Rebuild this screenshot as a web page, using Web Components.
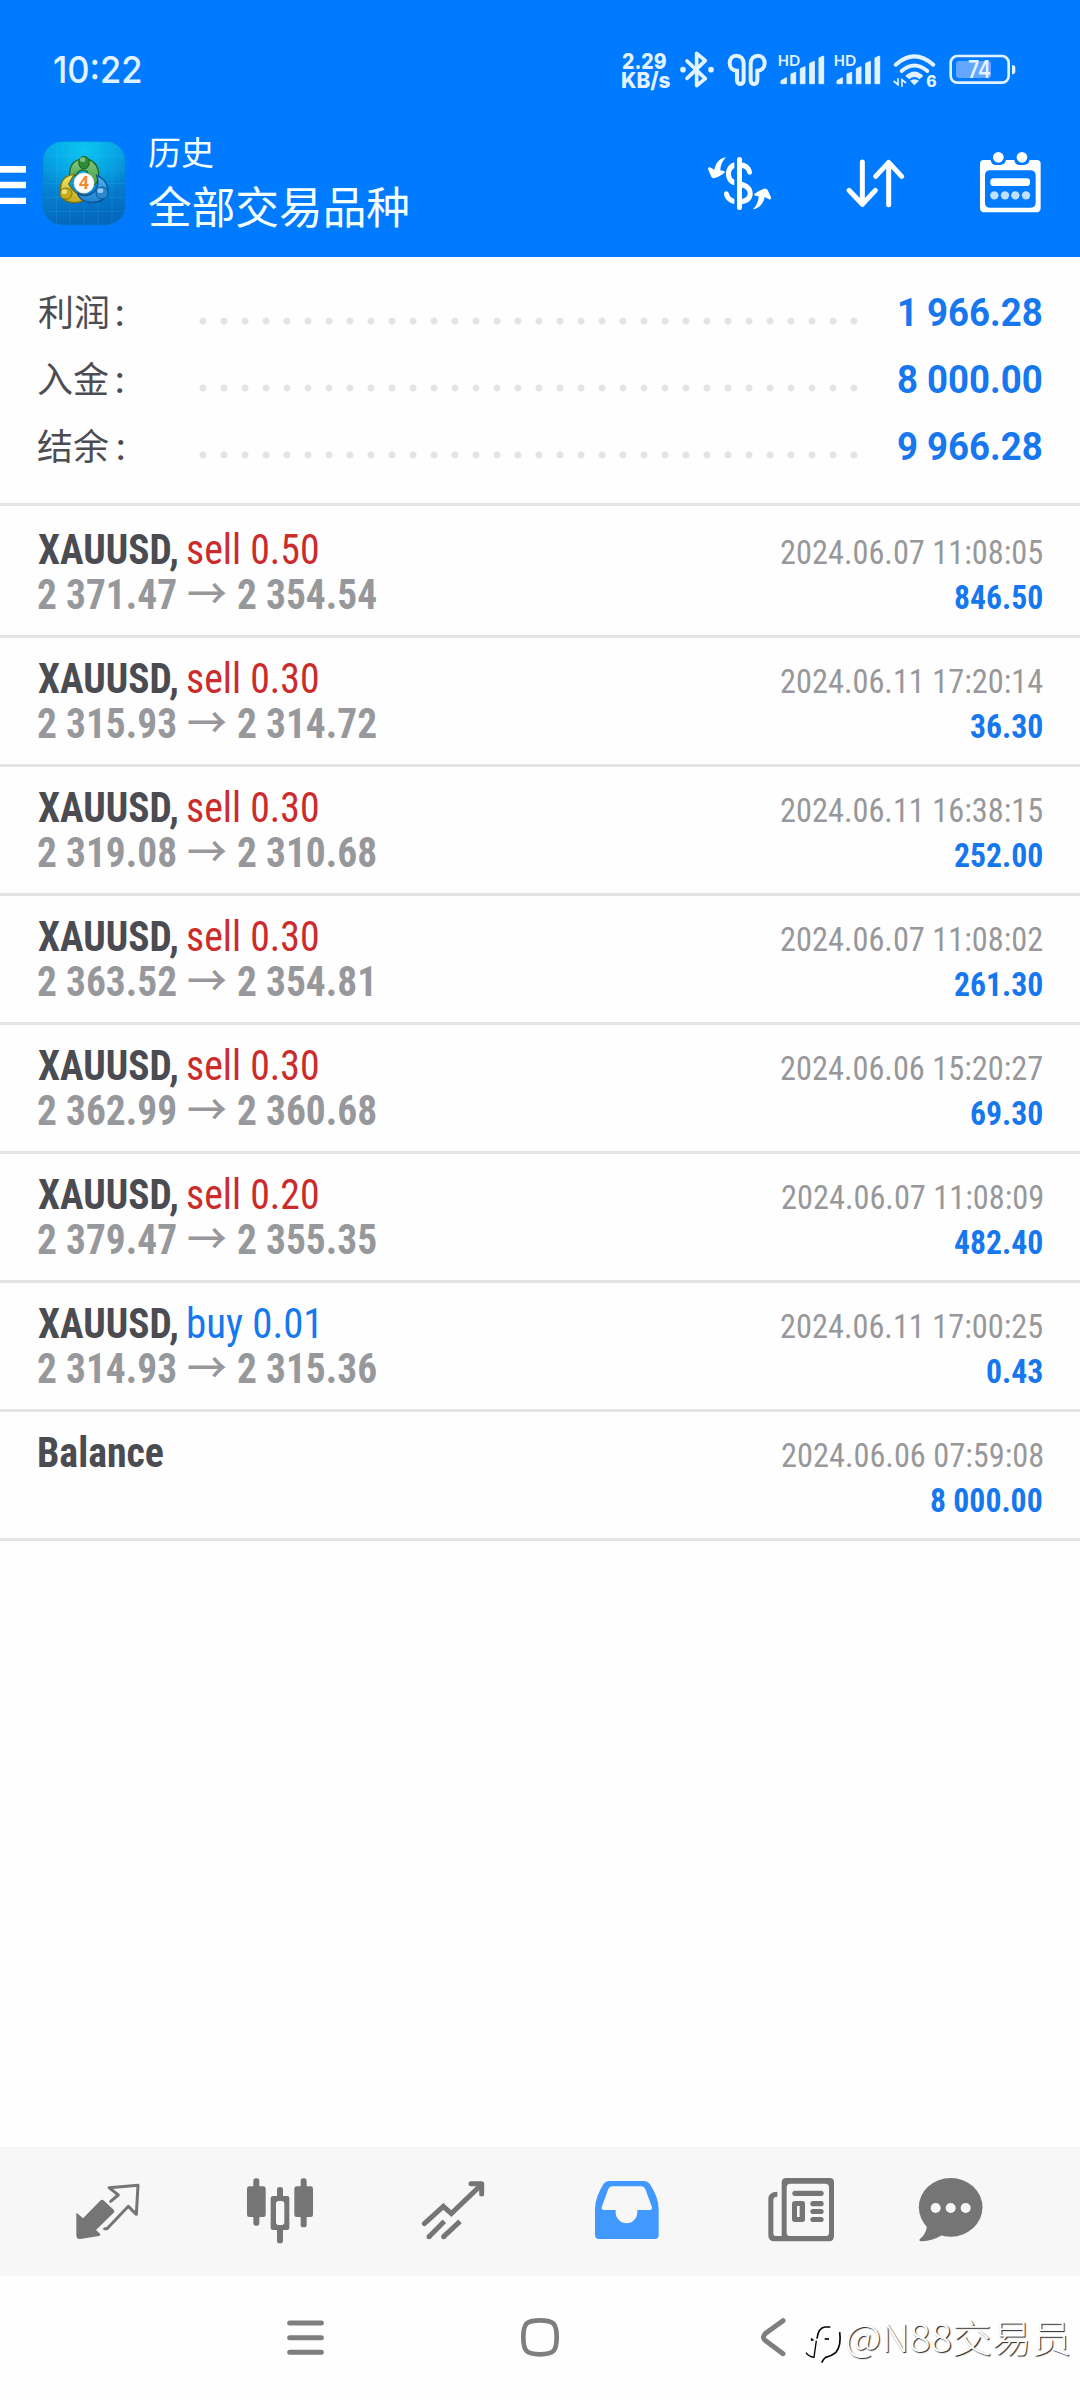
<!DOCTYPE html>
<html lang="zh-CN">
<head>
<meta charset="utf-8">
<meta name="viewport" content="width=device-width">
<title>历史</title>
<style>
html,body{margin:0;padding:0;background:#fefefe}
body{font-family:"Roboto Condensed",Roboto,"Noto Sans CJK SC",sans-serif}
</style>
</head>
<body>
<history-app></history-app>
<script>
const define=(name,css,html,init)=>customElements.define(name,class extends HTMLElement{
  constructor(){
    super();
    this.attachShadow({mode:'open'}).innerHTML=`<style>${css}</style>${typeof html==='function'?'':html}`;
  }
  connectedCallback(){
    if(typeof html==='function'&&!this.done){this.shadowRoot.innerHTML=`<style>${css}</style>${html(this)}`;this.done=true}
    if(init)init(this);
  }
});

/* Text whose glyph extent is fitted to a given width. "sample" names the string the width belongs to. */
const ctx=document.createElement('canvas').getContext('2d');
define('fit-text',
`:host{display:inline-block;white-space:pre}span{display:inline-block;transform-origin:0 50%;white-space:pre}`,
`<span></span>`,
el=>{
  const s=el.shadowRoot.querySelector('span');
  const text=el.getAttribute('text');
  s.textContent=text;
  const cs=getComputedStyle(el);
  ctx.font=`${cs.fontWeight} ${cs.fontSize} ${cs.fontFamily}`;
  const ink=t=>{const m=ctx.measureText(t);return{l:-m.actualBoundingBoxLeft,w:m.actualBoundingBoxRight+m.actualBoundingBoxLeft}};
  const ref=ink(el.getAttribute('sample')||text), own=ink(text);
  const k=parseFloat(el.getAttribute('w'))/ref.w;
  s.style.transform=`scaleX(${k})`;
  s.style.marginLeft=-own.l*k+'px';
  s.style.width=own.w+'px';
  s.style.marginRight=-(own.w-own.w*k)+own.l*k+'px';
  el.style.width=own.w*k+'px';
});

const S='#757575', W='#e2f2ff', B='#007aff';
const bars=`<g fill="${W}" stroke="${W}" stroke-width="3" stroke-linejoin="round"><path d="M542 161V152L558 143V161Z"/><path d="M572 161V132L586 127V161Z"/><path d="M600 161V116L614 110V161Z"/><path d="M628 161V100L642 94V161Z"/><path d="M656 161V84L670 78V161Z"/></g><text x="532" y="108" textLength="67" lengthAdjust="spacingAndGlyphs" font-family="Lato" font-weight="700" font-size="46" fill="${W}">HD</text>`;
const icons={
 bt:[238,60,104,116,`<path d="M259 93L314 146L288 167V70L314 92L259 145" fill="none" stroke="${W}" stroke-width="11" stroke-linejoin="round" stroke-linecap="round"/><circle cx="247" cy="119" r="8.5" fill="${W}"/><circle cx="331" cy="119" r="8.5" fill="${W}"/>`],
 buds:[380,66,122,106,`<g fill="none" stroke="${W}" stroke-width="12"><path d="M430 101C430 86 421 77 408 77C396 77 388 87 388 100C388 113 397 122 410 122V151C410 166 430 166 430 151Z"/><path d="M430 101C430 86 421 77 408 77C396 77 388 87 388 100C388 113 397 122 410 122V151C410 166 430 166 430 151Z" transform="translate(881 0) scale(-1 1)"/></g>`],
 sig:[530,66,145,100,bars],
 wifi:[874,66,136,106,`<g fill="none" stroke="${W}" stroke-width="12" stroke-linecap="round"><path d="M885 104Q941 54 998 104"/><path d="M903 123Q941 90 980 123"/></g><path d="M914 138Q941 111 968 138L956 148Q941 134 926 148Z" fill="${W}"/><path d="M928 152Q941 143 955 152L941 166Z" fill="${W}"/><g fill="none" stroke="${W}" stroke-width="5"><path d="M892 145V164L879 153M904 170V149L916 159"/></g><text x="977" y="170" textLength="31" lengthAdjust="spacingAndGlyphs" font-family="Inter" font-weight="800" font-size="46" fill="${W}">6</text>`],
 bat:[1046,72,202,92,`<rect x="1051" y="78" width="174" height="80" rx="20" fill="none" stroke="${W}" stroke-width="8"/><rect x="1067" y="93" width="105" height="51" rx="9" fill="#62a6ff"/><path d="M1235 105q10 1 10 8v12q0 7-10 8z" fill="${W}"/><text x="1103" y="144" textLength="69" lengthAdjust="spacingAndGlyphs" font-family="Inter" font-weight="600" font-size="71" fill="${W}">74</text>`],
 menu:[0,405,78,120,`<path d="M0 408h78v20H0zM0 455h78v20H0zM0 503h78v19H0z" fill="#fff"/>`],
 app:[126,333,252,252,`<defs><linearGradient id="bg" x1="0" y1="0" x2=".15" y2="1"><stop offset="0" stop-color="#00a4ea"/><stop offset=".5" stop-color="#0587d4"/><stop offset="1" stop-color="#0468bd"/></linearGradient><radialGradient id="gl" cx=".5" cy=".1" r=".6"><stop offset="0" stop-color="#0cc4f0"/><stop offset="1" stop-color="#0cc4f0" stop-opacity="0"/></radialGradient><linearGradient id="g" x1="0" y1="0" x2="0" y2="1"><stop offset="0" stop-color="#82c980"/><stop offset="1" stop-color="#3f9b43"/></linearGradient><linearGradient id="y" x1="0" y1="0" x2="0" y2="1"><stop offset="0" stop-color="#efe76a"/><stop offset="1" stop-color="#c5aa1d"/></linearGradient><linearGradient id="u" x1="0" y1="0" x2="0" y2="1"><stop offset="0" stop-color="#4db4ee"/><stop offset="1" stop-color="#2183cf"/></linearGradient></defs>
 <rect x="128" y="335" width="248" height="250" rx="58" fill="url(#bg)" stroke="#077bd2" stroke-width="2"/><rect x="128" y="335" width="248" height="250" rx="58" fill="url(#gl)"/>
 <path d="M130 376H374M130 418H374M130 460H374M130 502H374M130 544H374M169 338V582M210 336V584M252 336V584M294 336V584M336 338V582" stroke="#5bc8f5" stroke-opacity=".22" stroke-width="2"/>
 <path d="M209 440Q206 396 240 388H266Q298 400 296 440Q294 462 276 468L262 425Q240 412 228 436Z" fill="url(#g)" stroke="#1d6b2c" stroke-width="4"/>
 <path d="M223 433Q180 438 182 480L196 512Q224 524 250 512L254 494Q220 494 206 462Z" fill="url(#y)" stroke="#77700f" stroke-width="4"/>
 <path d="M290 436Q328 452 322 490Q312 520 270 517Q238 512 232 490Q262 506 284 484Q300 466 290 436Z" fill="url(#u)" stroke="#0d4f94" stroke-width="4"/>
 <ellipse cx="252" cy="398" rx="16" ry="19" fill="#2f8a37" stroke="#1c6128" stroke-width="3"/><ellipse cx="248" cy="389" rx="8" ry="7" fill="#9bd493" opacity=".75"/>
 <ellipse cx="198" cy="491" rx="18" ry="17" fill="#c7ab1e" stroke="#7c6e10" stroke-width="3"/><ellipse cx="193" cy="485" rx="8" ry="7" fill="#f6ef94" opacity=".8"/>
 <ellipse cx="306" cy="489" rx="18" ry="18" fill="#2a86cf" stroke="#13539a" stroke-width="3"/><ellipse cx="301" cy="482" rx="9" ry="7" fill="#a6dcf8" opacity=".8"/>
 <circle cx="252" cy="459" r="31" fill="#fff" stroke="#999" stroke-width="1"/><text x="252" y="478" text-anchor="middle" font-family="Open Sans" font-weight="700" font-size="52" fill="#f08a33">4</text>`],
 dollar:[84,60,192,192,`<rect x="171" y="81" width="15" height="159" rx="7" fill="#fff"/><path d="M163 97C148 101 138 114 138 132C138 150 148 162 163 166V149C156 146 153 141 153 132C153 123 157 117 163 114Z" fill="#fff"/><path d="M184 155C207 160 218 173 218 191C218 208 207 219 184 223V207C197 204 203 199 203 191C203 181 197 176 184 172Z" fill="#fff"/><path d="M184 97C204 101 213 111 216 126Q216 134 209 134Q203 134 201 127C199 119 196 116 184 113Z" fill="#fff"/><path d="M163 222C146 219 135 208 132 192Q132 184 139 184Q145 184 147 191C149 199 154 204 163 206Z" fill="#fff"/><path d="M138 82C120 84 107 98 103 119L90 112Q83 111 84 118L94 140Q98 146 105 144Q122 138 133 129Q137 124 131 123L121 121C121 106 128 92 138 82Z" fill="#fff"/><path transform="rotate(180 178.5 160)" d="M138 82C120 84 107 98 103 119L90 112Q83 111 84 118L94 140Q98 146 105 144Q122 138 133 129Q137 124 131 123L121 121C121 106 128 92 138 82Z" fill="#fff"/>`],
 sort:[498,60,177,192,`<path d="M547 96V222M507 181L547 223L586 181M626 224V98M587 139L626 97L665 139" fill="none" stroke="#fff" stroke-width="15" stroke-linecap="round" stroke-linejoin="round"/>`],
 cal:[897,60,186,192,`<path fill-rule="evenodd" fill="#fff" d="M911 90H1071Q1082 90 1082 101V233Q1082 247 1068 247H914Q900 247 900 233V101Q900 90 911 90ZM931 121Q915 121 915 136V218Q915 233 931 233H1050Q1067 233 1067 218V136Q1067 121 1050 121Z"/><path d="M932 82V90Q934 105 948 105H962Q978 103 978 88V82ZM1003 82V90Q1005 105 1019 105H1033Q1049 103 1049 88V82Z" fill="${B}"/><circle cx="955" cy="82" r="16" fill="#fff"/><circle cx="1026" cy="82" r="16" fill="#fff"/><rect x="931" y="145" width="119" height="23" rx="10" fill="#fff"/><g fill="#bfe0ff"><circle cx="943" cy="196" r="12.5"/><circle cx="975" cy="196" r="12.5"/><circle cx="1006" cy="196" r="12.5"/><circle cx="1038" cy="196" r="12.5"/></g>`],
 trade:[107,114,198,198,`<path d="M108 220Q109 218 112 221L128 235L181 181Q186 177 191 182L220 209Q224 214 220 218L167 270L179 281Q182 286 176 288L120 297Q108 298 108 286Z" fill="${S}"/><path d="M211 184L234 165L206 143L293 136L288 223L264 199L200 266H193" fill="none" stroke="${S}" stroke-width="9" stroke-linejoin="round" stroke-linecap="round"/>`],
 candles:[621,114,198,198,`<g fill="${S}"><rect x="640" y="115" width="18" height="142" rx="8"/><rect x="621" y="139" width="56" height="92" rx="7"/><rect x="782" y="115" width="18" height="147" rx="8"/><rect x="763" y="139" width="56" height="92" rx="7"/><rect x="711" y="141" width="18" height="40" rx="8"/><rect x="711" y="262" width="18" height="48" rx="8"/><path fill-rule="evenodd" d="M699 168H742Q748 168 748 175V263Q748 270 742 270H699Q692 270 692 263V175Q692 168 699 168ZM716 183Q708 183 708 191V247Q708 255 716 255H725Q733 255 733 247V191Q733 183 725 183Z"/></g>`],
 trend:[1143,114,198,198,`<g fill="none" stroke="${S}" stroke-width="15"><path d="M1153 251L1210 199L1234 221L1322 136" stroke-linecap="round" stroke-linejoin="miter"/><path d="M1293 131H1325V162" stroke-linecap="round" stroke-linejoin="round"/><path d="M1167 290L1213 244M1211 290L1260 244" /></g><circle cx="1167" cy="290" r="7.5" fill="${S}"/><circle cx="1211" cy="290" r="7.5" fill="${S}"/>`],
 inbox:[103,114,198,198,`<path fill-rule="evenodd" fill="#4199ff" d="M132 131Q138 123 148 123H254Q264 123 270 131Q297 172 297 207V285Q297 297 285 297H118Q106 297 106 285V207Q106 172 132 131ZM146 147Q149 139 157 139H245Q253 139 257 147L277 202Q278 210 271 210H233V217A32.5 32.500 0 0 1 168 217V210H132Q125 210 126 202Z"/>`],
 news:[625,114,198,198,`<path fill-rule="evenodd" fill="${S}" d="M680 114H810Q823 114 823 127V288Q823 304 808 304H645Q626 304 626 286V176Q626 156 653 155V170Q641 170 641 180V281Q641 288 648 288H666V127Q666 114 680 114ZM692 131Q681 131 681 142V278Q681 288 692 288H797Q808 288 808 278V142Q808 131 797 131Z"/><rect x="698" y="152" width="94" height="16" rx="8" fill="${S}"/><path fill-rule="evenodd" fill="${S}" d="M706 183H728Q736 183 736 191V238Q736 246 728 246H706Q697 246 697 238V191Q697 183 706 183ZM712 198V231H720V198Z"/><g fill="${S}"><rect x="752" y="183" width="40" height="16" rx="8"/><rect x="752" y="207" width="40" height="15" rx="7.500"/><rect x="752" y="231" width="40" height="15" rx="7.500"/></g>`],
 chat:[1075,114,198,198,`<ellipse cx="1173" cy="202" rx="95.500" ry="88" fill="${S}"/><path d="M1101 250Q1104 280 1080 298Q1077 304 1086 304Q1120 302 1148 285Z" fill="${S}"/><g fill="#f7f7f7"><circle cx="1128" cy="204" r="15"/><circle cx="1173" cy="204" r="15"/><circle cx="1218" cy="204" r="15"/></g>`],
 recents:[50,52,111,123,`<path d="M58 70H153M58 114H153M58 157.500H153" stroke="#7e7e7e" stroke-width="15" stroke-linecap="round"/>`],
 home:[750,52,120,123,`<path d="M760 113C760 72 769 62 810 62C851 62 860 72 860 113C860 154 851 164 810 164C769 164 760 154 760 113Z" fill="none" stroke="#7e7e7e" stroke-width="14"/>`],
 back:[62,144,78,123,`<path d="M128 155L77 192Q69 199 69 204Q69 210 77 216L128 254" fill="none" stroke="#7e7e7e" stroke-width="15" stroke-linecap="round" stroke-linejoin="round"/>`],
 mark:[196,164,112,126,`<g fill="none" stroke="#000"><path d="M199 250Q207 262 223 264L230 214" stroke-width="4"/><path d="M216 212H222M216 207V214M232 208Q236 175 256 173H272" stroke-width="5"/><path d="M255 209H268" stroke-width="5"/><path d="M300 188Q306 228 288 250Q276 260 258 264Q252 268 246 280" stroke-width="5"/></g>`]
};
define('ui-icon',`:host{display:block;flex:none}svg{display:block;overflow:visible}`,
 el=>{const[x,y,w,h,m]=icons[el.getAttribute('name')];return `<svg width="${w/3}" height="${h/3}" viewBox="${x} ${y} ${w} ${h}">${m}</svg>`});

define('status-bar',`
:host{display:flex;height:112px;box-sizing:border-box;padding:51px 63.700px 0 54px;color:${W};align-items:flex-start}
.time{font:500 37px/44px Inter,sans-serif;margin-top:-3px;flex:1}
.speed{font:800 22px/19px Inter,sans-serif;display:flex;flex-direction:column;margin:0 9.500px 0 0;padding-top:1px}`,
`<fit-text class="time" w="87" text="10:22"></fit-text>
<div class="speed"><fit-text w="44" text="2.29"></fit-text><fit-text w="48" text="KB/s"></fit-text></div>
<ui-icon name="bt" style="margin:-1px 12.600px 0 0"></ui-icon>
<ui-icon name="buds" style="margin:1px 9.300px 0 0"></ui-icon>
<ui-icon name="sig" style="margin:1px 7.700px 0 0"></ui-icon>
<ui-icon name="sig" style="margin:1px 10.300px 0 0"></ui-icon>
<ui-icon name="wifi" style="margin:1px 12px 0 0"></ui-icon>
<ui-icon name="bat" style="margin:3px 0 0 0"></ui-icon>`);

define('app-bar',`
:host{display:flex;height:145px;color:#f4ffff;padding-right:39px}
.m{margin:53px 16px 0 0}.a{margin:29px 23px 0 0}
.t{flex:1;display:flex;flex-direction:column;padding-top:14px}
.s{font:400 33.500px/50px "Noto Sans CJK SC",sans-serif}
.b{font:400 44px/58px "Noto Sans CJK SC",sans-serif}
.act{display:flex;padding-top:38px}`,
`<ui-icon class="m" name="menu"></ui-icon><ui-icon class="a" name="app"></ui-icon>
<div class="t"><fit-text class="s" w="64.500" text="历史"></fit-text><fit-text class="b" w="259" text="全部交易品种"></fit-text></div>
<div class="act"><ui-icon name="dollar" style="margin-right:74px"></ui-icon><ui-icon name="sort" style="margin-right:74px"></ui-icon><ui-icon name="cal"></ui-icon></div>`);

define('summary-line',`
:host{display:flex;height:67px;align-items:baseline;padding:0 38px;line-height:67px}
.l{display:flex;align-items:baseline;width:161px;color:#4c4c52;font:400 36px/67px "Noto Sans CJK SC",sans-serif;gap:7px}
.c{font-family:Roboto,sans-serif;font-weight:500}
.d{flex:none;width:672px;height:8px;background:radial-gradient(circle 4px at 4px 4px,#e4e4e4 0,#e4e4e4 3.100px,rgba(228,228,228,0) 3.900px) 0 0/21px 8px repeat-x}
.d{transform:translateY(-1px)}
.v{margin-left:auto;font:700 38px/67px Roboto,sans-serif;color:#1677ee}`,
el=>`<div class="l"><fit-text w="70" sample="利润" text="${el.getAttribute('label')}"></fit-text><span class="c">:</span></div><div class="d"></div><fit-text class="v" w="144" sample="9 966.28" text="${el.getAttribute('value')}"></fit-text>`);

define('deal-row',`
:host{display:block;box-sizing:border-box;height:129px;padding:18px 38px 0;border-bottom:3px solid #e4e4e4}
:host([first]){height:132px;padding-top:21px}
.l{display:flex;height:45px;line-height:45px;align-items:baseline;justify-content:space-between}
.q{display:flex;align-items:baseline;font-size:42px}
.q::after{content:"\\200b"}
.n{font-weight:700;color:#4b4b52;margin:0 12px 0 -.5px}
.o{font-weight:700;color:#4b4b52;margin-left:.5px}
.sell{color:#cb2b2b}.buy{color:#1677ee}
.p{font-weight:700;color:#97989c}
.ar{font:500 42px/0 "Noto Sans CJK SC",sans-serif;color:#97989c;margin:0 12px}
.d{font-size:34px;color:#98989b}
.v{font-size:34px;font-weight:700;color:#1677ee}`,
el=>{const a=n=>el.getAttribute(n),s=a('side');
 return `<div class="l"><div class="q">${s?`<fit-text class="n" w="138.800" text="XAUUSD,"></fit-text><fit-text class="${s}" w="${s==='buy'?129:130}" sample="${s} ${s==='buy'?'0.01':'0.50'}" text="${s} ${a('lots')}"></fit-text>`:`<fit-text class="o" w="124" text="Balance"></fit-text>`}</div><fit-text class="d" w="261.500" sample="2024.06.07 11:08:05" text="${a('time')}"></fit-text></div>
<div class="l"><div class="q">${s?`<fit-text class="p" w="138" sample="2 371.47" text="${a('from')}"></fit-text><fit-text class="ar" w="38" text="→"></fit-text><fit-text class="p" w="138" sample="2 354.54" text="${a('to')}"></fit-text>`:''}</div><fit-text class="v" w="87.300" sample="846.50" text="${a('profit')}"></fit-text></div>`});

define('tab-bar',`:host{display:flex;height:129px;box-sizing:border-box;background:#f7f7f7;padding:31px 0 0 75.700px}ui-icon{margin-right:105.300px}ui-icon:nth-of-type(2){margin-right:108px}ui-icon:nth-of-type(3){margin-right:107.300px}ui-icon:nth-of-type(4){margin-right:108px}ui-icon:nth-of-type(5){margin-right:84px}`,
['trade','candles','trend','inbox','news','chat'].map(n=>`<ui-icon name="${n}"></ui-icon>`).join(''));

define('nav-bar',`:host{display:flex;height:124px;box-sizing:border-box;padding:41px 0 0 286.700px}
.mk{margin:7px 4px 0 18.700px}
.wm{font:300 38px/46px "Noto Sans CJK SC",sans-serif;color:#fff;text-shadow:1px 1px 1px #222;margin-top:-4px}`,
`<ui-icon name="recents" style="margin-right:196.300px"></ui-icon><ui-icon name="home" style="margin-right:200.700px"></ui-icon><ui-icon name="back"></ui-icon><ui-icon name="mark" class="mk"></ui-icon><fit-text class="wm" w="222" text="@N88交易员"></fit-text>`);

const deals=[
['sell','0.50','2 371.47','2 354.54','2024.06.07 11:08:05','846.50'],
['sell','0.30','2 315.93','2 314.72','2024.06.11 17:20:14','36.30'],
['sell','0.30','2 319.08','2 310.68','2024.06.11 16:38:15','252.00'],
['sell','0.30','2 363.52','2 354.81','2024.06.07 11:08:02','261.30'],
['sell','0.30','2 362.99','2 360.68','2024.06.06 15:20:27','69.30'],
['sell','0.20','2 379.47','2 355.35','2024.06.07 11:08:09','482.40'],
['buy','0.01','2 314.93','2 315.36','2024.06.11 17:00:25','0.43'],
['','','','','2024.06.06 07:59:08','8 000.00']];
define('history-app',`
:host{display:flex;flex-direction:column;width:1080px;height:2400px;overflow:hidden;background:#fefefe}
header{background:${B};height:257px}
.sum{height:249px;box-sizing:border-box;padding-top:20px;border-bottom:3px solid #e4e4e4}
.list{flex:1}`,
`<header><status-bar></status-bar><app-bar></app-bar></header>
<div class="sum"><summary-line label="利润" value="1 966.28"></summary-line><summary-line label="入金" value="8 000.00"></summary-line><summary-line label="结余" value="9 966.28"></summary-line></div>
<div class="list">${deals.map((d,i)=>`<deal-row ${i?'':'first'} side="${d[0]}" lots="${d[1]}" from="${d[2]}" to="${d[3]}" time="${d[4]}" profit="${d[5]}"></deal-row>`).join('')}</div>
<tab-bar></tab-bar><nav-bar></nav-bar>`);
</script>
</body>
</html>
